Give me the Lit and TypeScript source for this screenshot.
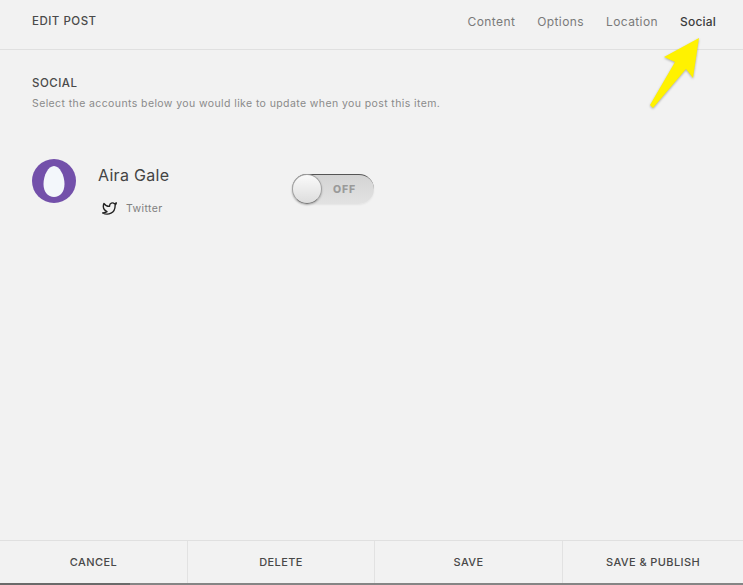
import { LitElement, html, css } from "lit";
import { customElement } from "lit/decorators.js";

@customElement("app-root")
export class AppRoot extends LitElement {
  static styles = css`
    :host {
      display: flex;
      flex-direction: column;
      height: 100vh;
      position: relative;
      overflow: hidden;
      background: #f2f2f2;
      color: #3f3f3f;
      font-family: "Inter", "Open Sans", sans-serif;
    }
    .header {
      height: 49px;
      flex: none;
      box-sizing: border-box;
      display: flex;
      align-items: center;
      justify-content: space-between;
      padding: 0 27px 7px 32px;
    }
    .rule { height: 1px; background: #e0e0e0; flex: none; }
    .title { font-size: 11.5px; font-weight: 500; letter-spacing: 0.5px; color: #4a4a4a; }
    .tabs { display: flex; gap: 22px; font-size: 12px; letter-spacing: 0.4px; color: #7a7a7a; }
    .tabs .on { color: #3c3c3c; font-weight: 500; letter-spacing: 0.2px; }
    .body { flex: 1; padding: 25px 32px 0; }
    h2 { margin: 0; font-size: 11.5px; font-weight: 500; letter-spacing: 0.5px; line-height: 16px; color: #4a4a4a; }
    .hint { margin: 6px 0 0; font-size: 10.5px; letter-spacing: 0.4px; line-height: 14px; color: #8a8a8a; }
    .account { display: flex; margin-top: 48px; align-items: flex-start; }
    .avatar {
      width: 44px; height: 44px; border-radius: 50%; background: #7350aa;
      display: flex; align-items: center; justify-content: center; flex: none;
    }
    .info { margin-left: 22px; width: 194px; flex: none; }
    .name { font-size: 16px; letter-spacing: 0.3px; line-height: 20px; margin-top: 6px; color: #444; }
    .network { display: flex; align-items: center; gap: 9px; margin: 16px 0 0 4px; font-size: 10.5px; letter-spacing: 0.4px; color: #808080; line-height: 15px; }
    .toggle {
      width: 82px; height: 30px; margin-top: 15px; border-radius: 15px; box-sizing: border-box;
      background: linear-gradient(#d4d4d4, #e2e2e2);
      border-top: 1px solid #555;
      box-shadow: 0 1px 2px rgba(0,0,0,.06);
      display: flex; align-items: center; position: relative;
    }
    .knob {
      width: 30px; height: 30px; border-radius: 50%; box-sizing: border-box; flex: none; margin-top: -1px;
      border: 1px solid #a0a0a0; border-bottom-color: #777;
      background: linear-gradient(#fafafa, #dddddd);
      box-shadow: 0 1px 2px rgba(0,0,0,.25);
    }
    .off { font-size: 10.5px; font-weight: 800; letter-spacing: 0.9px; color: #9a9a9a; margin-left: 11px; }
    .footer { height: 42px; flex: none; display: grid; grid-template-columns: 187px 187px 188px 1fr; border-top: 1px solid #e0e0e0; }
    .footer div {
      display: flex; align-items: center; justify-content: center;
      font-size: 11px; font-weight: 500; letter-spacing: 0.4px; color: #484848;
      border-left: 1px solid #e2e2e2; box-sizing: border-box;
    }
    .footer div:first-child { border-left: 0; }
    .progress { height: 2px; flex: none; background: #858585; display: flex; }
    .progress i { display: block; width: 130px; background: #6a6a6a; }
    .arrow { position: absolute; left: 640px; top: 30px; width: 70px; height: 85px; filter: drop-shadow(0 1px 1px rgba(0,0,0,.3)); }
  `;

  render() {
    return html`
      <div class="header">
        <div class="title">EDIT POST</div>
        <div class="tabs">
          <span>Content</span><span>Options</span><span>Location</span><span class="on">Social</span>
        </div>
      </div>
      <div class="rule"></div>
      <div class="body">
        <h2>SOCIAL</h2>
        <p class="hint">Select the accounts below you would like to update when you post this item.</p>
        <div class="account">
          <div class="avatar">
            <svg width="22" height="31" viewBox="0 0 22 31"><path fill="#f3f7fb" d="M11 0C16.5 0 21.5 9 21.5 18 21.5 26 17 31 11 31 5 31 .5 26 .5 18 .5 9 5.500 0 11 0z"/></svg>
          </div>
          <div class="info">
            <div class="name">Aira Gale</div>
            <div class="network">
              <svg width="15" height="15" viewBox="0 0 24 24" fill="none" stroke="#222" stroke-width="2.2" stroke-linejoin="round"><path d="M23 3a10.900 10.900 0 0 1-3 1.530 4.480 4.480 0 0 0-7.860 3v1A10.660 10.660 0 0 1 3 4s-4 9 5 13a11.640 11.640 0 0 1-7 2c9 5 20 0 20-11.500a4.500 4.500 0 0 0-.08-.83A7.720 7.720 0 0 0 23 3z"/></svg>
              <span>Twitter</span>
            </div>
          </div>
          <div class="toggle"><div class="knob"></div><span class="off">OFF</span></div>
        </div>
      </div>
      <div class="footer">
        <div>CANCEL</div><div>DELETE</div><div>SAVE</div><div>SAVE &amp; PUBLISH</div>
      </div>
      <div class="progress"><i></i></div>
      <svg class="arrow" viewBox="0 0 70 85"><polygon fill="#fff200" points="59,8 24,27 35,32 10,75 13,78 46,39 53,48"/></svg>
    `;
  }
}
